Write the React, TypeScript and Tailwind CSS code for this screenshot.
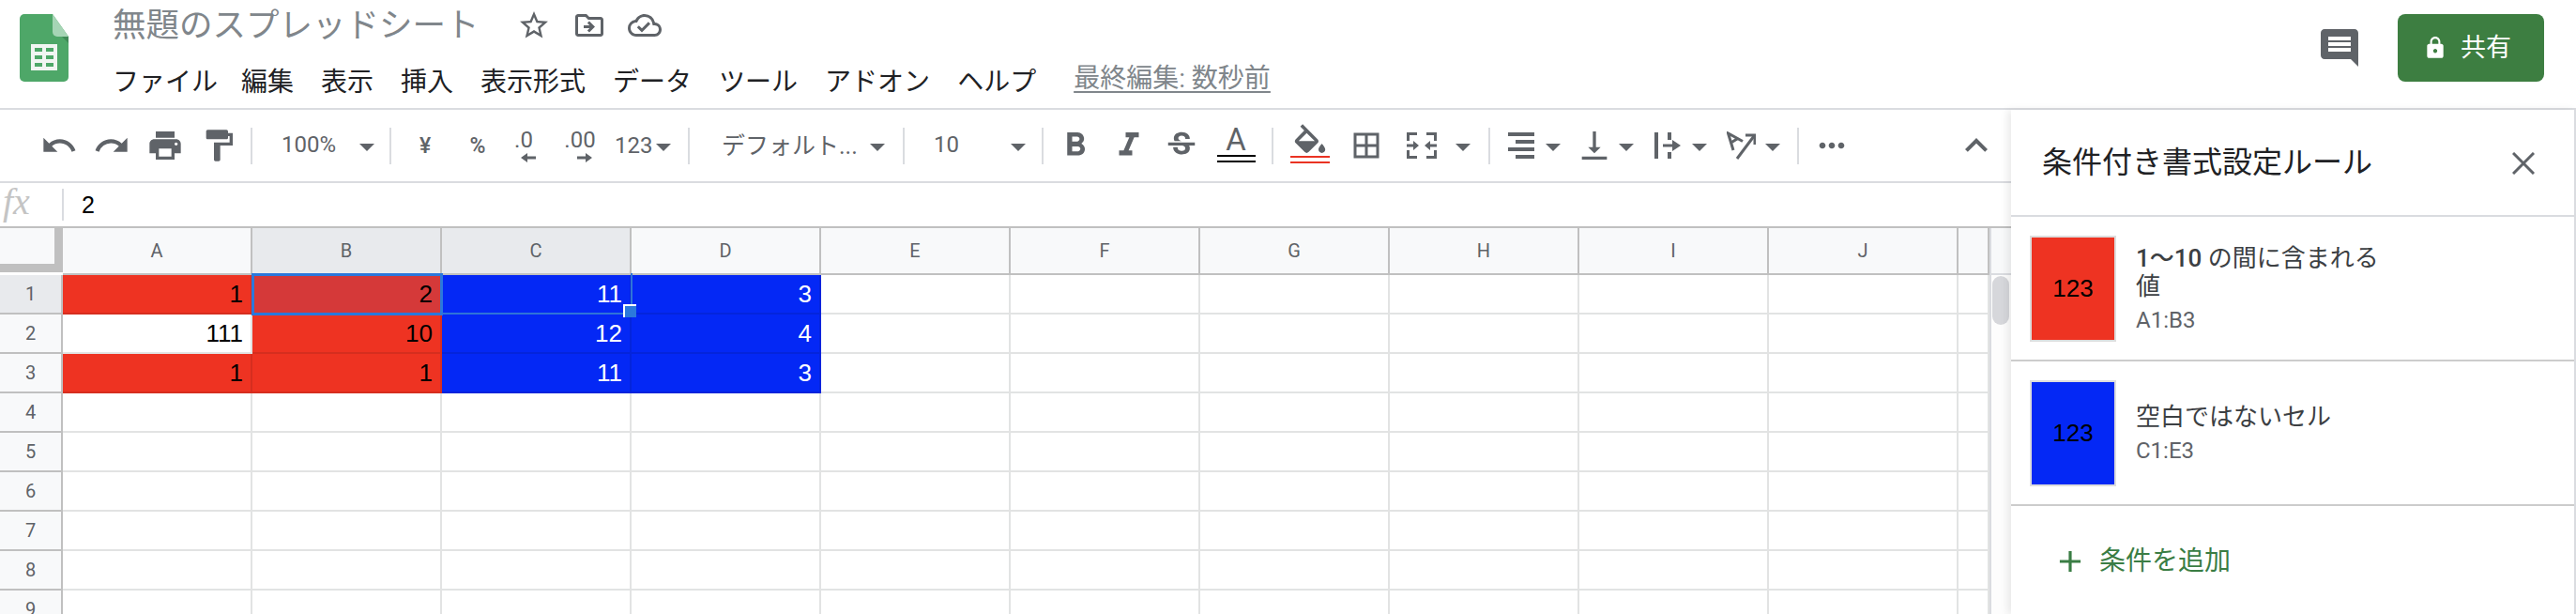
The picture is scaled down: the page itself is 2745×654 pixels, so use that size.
import {
  MdUndo, MdRedo, MdPrint, MdFormatPaint, MdStarBorder, MdOutlineDriveFileMove, MdOutlineCloudDone,
  MdFormatBold, MdFormatItalic, MdStrikethroughS, MdBorderAll, MdVerticalAlignBottom, MdMoreHoriz,
  MdExpandLess, MdAdd, MdLock, MdComment,
} from 'react-icons/md';

const GREY = '#5f6368';

const columns = ['A', 'B', 'C', 'D', 'E', 'F', 'G', 'H', 'I', 'J', ''];

type Cell = { v: string; tone?: 'red' | 'blue' | 'active' };

const data: Cell[][] = [
  [{ v: '1', tone: 'red' }, { v: '2', tone: 'active' }, { v: '11', tone: 'blue' }, { v: '3', tone: 'blue' }],
  [{ v: '111' }, { v: '10', tone: 'red' }, { v: '12', tone: 'blue' }, { v: '4', tone: 'blue' }],
  [{ v: '1', tone: 'red' }, { v: '1', tone: 'red' }, { v: '11', tone: 'blue' }, { v: '3', tone: 'blue' }],
];

const toneClass = {
  red: 'bg-[#ee3322] text-black border-[#d62e1f]',
  active: 'bg-[#d53939] text-black border-[#d53939]',
  blue: 'bg-[#0428f5] text-white border-[#0424dc]',
};

function Caret() {
  return (
    <svg width="16" height="8" viewBox="0 0 16 8" className="mt-[4px] shrink-0">
      <polygon points="0,0 16,0 8,8" fill={GREY} />
    </svg>
  );
}

function Sep() {
  return <div className="w-[2px] h-[39px] bg-[#dadce0] shrink-0" />;
}

function Logo() {
  return (
    <svg width="52" height="72" viewBox="0 0 52 72">
      <path d="M5 0h30l17 24v43a5 5 0 0 1-5 5H5a5 5 0 0 1-5-5V5a5 5 0 0 1 5-5z" fill="#4ea768" />
      <path d="M35 14l17 17v-7z" fill="#3f8a57" />
      <path d="M35 0l17 24H40a5 5 0 0 1-5-5z" fill="#a6d5b5" />
      <rect x="12" y="32" width="28" height="28" fill="#f1f5f2" />
      <g fill="#4ea768">
        <rect x="16" y="36" width="8" height="4" />
        <rect x="28" y="36" width="8" height="4" />
        <rect x="16" y="44" width="8" height="4" />
        <rect x="28" y="44" width="8" height="4" />
        <rect x="16" y="52" width="8" height="4" />
        <rect x="28" y="52" width="8" height="4" />
      </g>
    </svg>
  );
}

function Header() {
  return (
    <header className="h-[117px] flex border-b-2 border-[#dadce0] shrink-0">
      <div className="ml-[21px] mt-[15px] shrink-0">
        <Logo />
      </div>
      <div className="ml-[47px]">
        <div className="h-[54px] flex items-center">
          <span className="text-[35.5px] text-[#80868b] leading-none mt-[2px]">無題のスプレッドシート</span>
          <div className="flex items-center ml-[29px] text-[#5f6368]">
            <span className="w-[59px] flex justify-center"><MdStarBorder size={36} /></span>
            <span className="w-[59px] flex justify-center"><MdOutlineDriveFileMove size={36} /></span>
            <span className="w-[59px] flex justify-center"><MdOutlineCloudDone size={36} /></span>
          </div>
        </div>
        <nav className="mt-[10px] h-[48px] flex items-center gap-[29px] text-[28px] text-[#202124] whitespace-nowrap">
          <span className="-mr-[4px]">ファイル</span>
          <span>編集</span>
          <span>表示</span>
          <span>挿入</span>
          <span>表示形式</span>
          <span>データ</span>
          <span>ツール</span>
          <span>アドオン</span>
          <span>ヘルプ</span>
          <span className="ml-[11px] -mt-[8px] text-[28px] text-[#80868b] underline underline-offset-[4px]">最終編集: 数秒前</span>
        </nav>
      </div>
      <div className="ml-auto flex items-start">
        <span className="mt-[27px] text-[#5f6368]"><MdComment size={48} /></span>
        <button className="ml-[38px] mr-[34px] mt-[15px] w-[156px] h-[72px] rounded-[8px] bg-[#3d7e41] text-white flex items-center pl-[27px]">
          <MdLock size={26} />
          <span className="ml-[14px] text-[27px]">共有</span>
        </button>
      </div>
    </header>
  );
}

function DecimalTool({ label, dir, w }: { label: string; dir: 'l' | 'r'; w: string }) {
  return (
    <span className={`${w} flex flex-col items-center text-[24px] leading-none text-[#5f6368]`}>
      <span className="-mt-[1px]">{label}</span>
      <svg width="16" height="10" viewBox="0 0 16 10" className="mt-[2px] ml-[10px]" style={{ transform: dir === 'l' ? 'scaleX(-1)' : undefined }}>
        <polygon points="0,3.5 9,3.5 9,0 16,5 9,10 9,6.5 0,6.5" fill={GREY} />
      </svg>
    </span>
  );
}

function Toolbar() {
  return (
    <div className="h-[78px] flex items-center pl-[35px] border-b-2 border-[#dadce0] text-[#5f6368] shrink-0 whitespace-nowrap">
      <span className="w-[56px] flex justify-center"><MdUndo size={40} /></span>
      <span className="w-[56px] flex justify-center"><MdRedo size={40} /></span>
      <span className="w-[57px] flex justify-center"><MdPrint size={40} /></span>
      <span className="w-[57px] flex justify-center"><MdFormatPaint size={40} /></span>
      <span className="ml-[6px]"><Sep /></span>

      <span className="w-[146px] pl-[31px] pr-[16px] flex items-center justify-between text-[24px] leading-none">
        <span className="-mt-[2px]">100%</span><Caret />
      </span>
      <Sep />

      <span className="w-[72px] flex justify-center text-[23px] leading-none font-medium">¥</span>
      <span className="w-[40px] flex justify-center text-[23px] leading-none font-medium">%</span>
      <DecimalTool label=".0" dir="l" w="w-[58px]" />
      <DecimalTool label=".00" dir="r" w="w-[62px]" />
      <span className="w-[84px] pl-[6px] pr-[18px] flex items-center justify-between text-[24px] leading-none">
        <span>123</span><Caret />
      </span>
      <Sep />

      <span className="w-[227px] pl-[34px] pr-[19px] flex items-center justify-between text-[25px] leading-none">
        <span>デフォルト...</span><Caret />
      </span>
      <Sep />

      <span className="w-[146px] pl-[31px] pr-[17px] flex items-center justify-between text-[24px] leading-none">
        <span className="-mt-[2px]">10</span><Caret />
      </span>
      <Sep />

      <span className="w-[68px] flex justify-center"><MdFormatBold size={42} /></span>
      <span className="w-[46px] flex justify-center"><MdFormatItalic size={42} /></span>
      <span className="w-[66px] flex justify-center"><MdStrikethroughS size={38} /></span>
      <span className="w-[50px] flex flex-col items-center">
        <span className="text-[33px] leading-[30px] -mt-[4px]">A</span>
        <span className="mt-[1px] w-[41px] h-[8px] border-y-2 border-black" />
      </span>
      <span className="ml-[13px]"><Sep /></span>

      <span className="w-[78px] flex flex-col items-center">
        <svg width="36" height="33" viewBox="2 0 20 18" className="-mt-[5px]">
          <path d="M16.56 8.94L7.62 0 6.21 1.41l2.38 2.38-5.15 5.15c-.59.59-.59 1.54 0 2.12l5.5 5.5c.29.29.68.44 1.06.44s.77-.15 1.06-.44l5.5-5.5c.59-.58.59-1.53 0-2.12zM5.21 10L10 5.21 14.79 10H5.21zM19 11.5s-2 2.17-2 3.5c0 1.1.9 2 2 2s2-.9 2-2c0-1.33-2-3.5-2-3.5z" fill={GREY} />
        </svg>
        <span className="mt-[1px] w-[42px] h-[8px] border-y-2 border-[#ea3323]" />
      </span>
      <span className="w-[41px] flex justify-center"><MdBorderAll size={36} /></span>

      <svg width="32" height="28" viewBox="0 0 32 28" className="ml-[23px] shrink-0" fill={GREY}>
        <path d="M0 0h11v3H3v6H0zM21 0h11v9h-3V3h-8zM0 19h3v6h8v3H0zM29 19h3v9H21v-3h8z" />
        <path d="M0 12.5h7V9l6 5-6 5v-3.5H0zM32 12.5h-7V9l-6 5 6 5v-3.5h7z" />
      </svg>
      <span className="ml-[20px]"><Caret /></span>
      <span className="ml-[19px]"><Sep /></span>

      <svg width="28" height="28" viewBox="0 0 28 28" className="ml-[19px] shrink-0" fill={GREY}>
        <rect width="28" height="4" y="0" />
        <rect width="20" height="4" x="8" y="8" />
        <rect width="28" height="4" y="16" />
        <rect width="20" height="4" x="8" y="24" />
      </svg>
      <span className="ml-[12px]"><Caret /></span>
      <span className="ml-[16px] flex justify-center"><MdVerticalAlignBottom size={40} /></span>
      <span className="ml-[6px]"><Caret /></span>

      <svg width="28" height="28" viewBox="0 0 28 28" className="ml-[22px] shrink-0" fill={GREY}>
        <rect width="4" height="28" />
        <rect width="4" height="8" x="14" y="0" />
        <rect width="4" height="7" x="14" y="21" />
        <path d="M9 12.5h10V8l9 6-9 6v-4.5H9z" />
      </svg>
      <span className="ml-[12px]"><Caret /></span>

      <svg width="31" height="30" viewBox="0 0 31 30" className="ml-[21px] shrink-0" fill="none" stroke={GREY} strokeWidth="3">
        <path d="M7 20L1.5 2 17 10.5M4.5 12L11 8" />
        <path d="M11 29L29 5" />
        <path d="M20 4h10v10" />
      </svg>
      <span className="ml-[10px]"><Caret /></span>
      <span className="ml-[18px]"><Sep /></span>

      <span className="ml-[15px]"><MdMoreHoriz size={40} /></span>
      <span className="ml-[110px]"><MdExpandLess size={48} /></span>
    </div>
  );
}

function FormulaBar() {
  return (
    <div className="h-[48px] flex items-center border-b-2 border-[#c0c0c0] shrink-0">
      <span className="w-[66px] pl-[3px] font-['Liberation_Serif',serif] italic text-[40px] leading-none text-[#c4c4c4] -mt-[6px]">fx</span>
      <span className="w-[2px] h-[34px] bg-[#dadce0]" />
      <span className="ml-[19px] font-['Liberation_Sans',sans-serif] text-[25px] text-black leading-none">2</span>
    </div>
  );
}

function Sheet() {
  return (
    <div className="flex-1 flex min-h-0 overflow-hidden">
      <div className="relative w-[2120px] shrink-0">
        <div className="h-[50px] flex">
          <div className="w-[67px] h-[47px] bg-[#f8f9fa] border-r-[9px] border-b-[9px] border-[#c0c0c0] shrink-0" />
          {columns.map((c, i) => (
            <div
              key={i}
              className={`${i === 10 ? 'w-[33px]' : 'w-[202px]'} ${i === 1 || i === 2 ? 'bg-[#e8eaed]' : 'bg-[#f8f9fa]'} border-r-2 border-b-2 border-[#c0c0c0] flex items-center justify-center text-[20px] text-[#5f6368] shrink-0`}
            >
              {c}
            </div>
          ))}
        </div>
        {Array.from({ length: 9 }).map((_, r) => (
          <div key={r} className="h-[42px] flex">
            <div className={`w-[67px] ${r === 0 ? 'bg-[#e8eaed]' : 'bg-[#f8f9fa]'} border-r-2 border-b-2 border-[#c0c0c0] flex items-center justify-center text-[20px] text-[#5f6368] shrink-0`}>
              {r + 1}
            </div>
            {columns.map((_c, c) => {
              const cell = data[r]?.[c];
              const tone = cell?.tone ? toneClass[cell.tone] : 'border-[#e2e3e3] text-black';
              return (
                <div
                  key={c}
                  className={`${c === 10 ? 'w-[33px]' : 'w-[202px]'} ${tone} border-r-2 border-b-2 flex items-center justify-end pr-[8px] font-['Liberation_Sans',sans-serif] text-[26px] shrink-0`}
                >
                  {cell?.v}
                </div>
              );
            })}
          </div>
        ))}
        {/* selection */}
        <div className="absolute left-[268px] top-[48px] w-[204px] h-[45px] border-[3px] border-[#2b78dc]" />
        <div className="absolute left-[471px] top-[48px] w-[203px] h-[44px] border-2 border-l-0 border-t-0 border-[#2f74d8]" />
        <div className="absolute left-[664px] top-[81px] w-[14px] h-[14px] bg-[#2b78dc] border-t-2 border-l-2 border-white" />
      </div>
      <div className="w-[23px] shrink-0 border-l-2 border-[#dadce0] bg-[#fdfdfd]">
        <div className="h-[50px] bg-[#f8f9fa] border-b-2 border-[#dadce0]" />
        <div className="mt-[1px] ml-[1px] w-[18px] h-[52px] rounded-[9px] bg-[#d6d7db]" />
      </div>
    </div>
  );
}

function RuleCard({ color, range, children }: { color: string; range: string; children: React.ReactNode }) {
  return (
    <div className="h-[154px] flex items-center pl-[20px] border-b-2 border-[#cccccc]">
      <div className="w-[92px] h-[113px] border-2 border-[#dddddd] flex items-center justify-center font-['Liberation_Sans',sans-serif] text-[26px] text-black shrink-0" style={{ backgroundColor: color }}>
        123
      </div>
      <div className="ml-[21px] w-[275px]">
        <div className="text-[26px] leading-[30px] text-[#3c4043]">{children}</div>
        <div className="mt-[8px] text-[24px] leading-[26px] text-[#5f6368]">{range}</div>
      </div>
    </div>
  );
}

function Panel() {
  return (
    <aside className="w-[602px] shrink-0 border-r-2 border-[#dadce0] bg-white shadow-[-4px_0_8px_rgba(0,0,0,0.08)] z-10">
      <div className="h-[114px] flex items-center justify-between pl-[33px] pr-[42px] border-b-2 border-[#dadce0]">
        <span className="text-[32px] text-[#202124]">条件付き書式設定ルール</span>
        <svg width="24" height="24" viewBox="0 0 24 24" className="mt-[2px]" fill="none" stroke={GREY} strokeWidth="3">
          <path d="M1 1l22 22M23 1L1 23" />
        </svg>
      </div>
      <RuleCard color="#ee3322" range="A1:B3">
        <span className="font-medium">1〜10</span> の間に含まれる値
      </RuleCard>
      <RuleCard color="#0428f5" range="C1:E3">
        空白ではないセル
      </RuleCard>
      <div className="h-[118px] flex items-center pl-[44px] text-[#3a7d44]">
        <MdAdd size={38} />
        <span className="ml-[12px] text-[28px]">条件を追加</span>
      </div>
    </aside>
  );
}

export default function App() {
  return (
    <div className="w-[2745px] h-[654px] overflow-hidden flex flex-col bg-white font-['Roboto','Noto_Sans_CJK_JP',sans-serif]">
      <Header />
      <div className="flex-1 flex min-h-0">
        <div className="w-[2143px] shrink-0 flex flex-col min-h-0">
          <Toolbar />
          <FormulaBar />
          <Sheet />
        </div>
        <Panel />
      </div>
    </div>
  );
}
